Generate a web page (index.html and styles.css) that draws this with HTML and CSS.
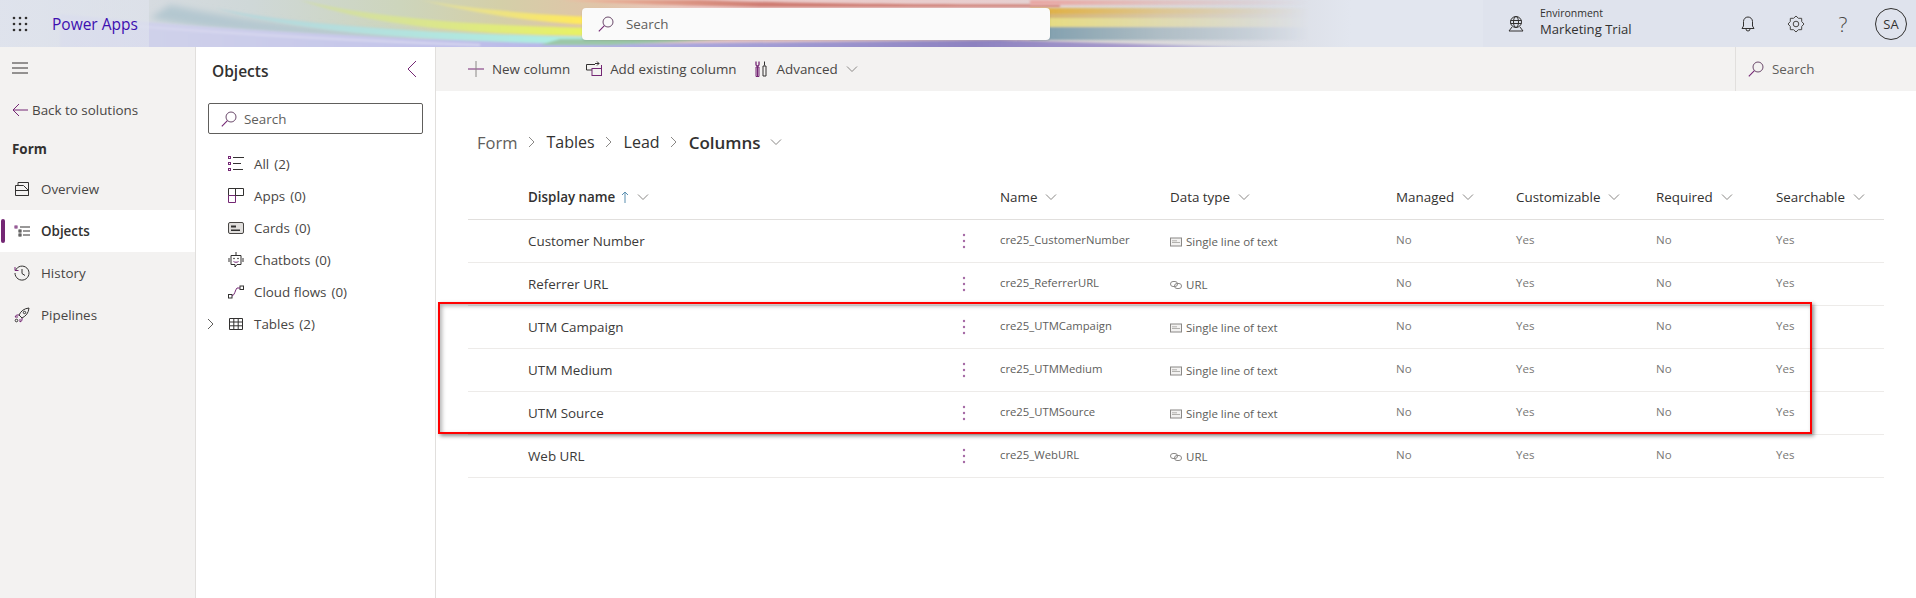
FILE: index.html
```html
<!DOCTYPE html>
<html lang="en">
<head>
<meta charset="utf-8">
<title>Power Apps</title>
<link rel="stylesheet" href="styles.css">
</head>
<body>
<svg class="sprite" width="0" height="0" aria-hidden="true">
  <symbol id="search" viewBox="0 0 16 16"><circle cx="10" cy="6" r="5" fill="none" stroke="#6b4a6b"/><path d="M6.400 9.600 .8 15.300" fill="none" stroke="#742774" stroke-width="1.100"/></symbol>
  <symbol id="chev" viewBox="0 0 12 8"><path d="M1 1.500 6 6.500 11 1.500" fill="none" stroke="#8a8886"/></symbol>
  <symbol id="dots" viewBox="0 0 4 16"><circle cx="2" cy="2" r="1.200"/><circle cx="2" cy="8" r="1.200"/><circle cx="2" cy="14" r="1.200"/></symbol>
  <symbol id="abc" viewBox="0 0 12 10"><rect x=".5" y="1" width="11" height="8" fill="#f3f2f1" stroke="#8a8886"/><path d="M2 5.500h8M2 3.800h5" stroke="#a19f9d" stroke-width=".8"/></symbol>
  <symbol id="link" viewBox="0 0 12 10"><rect x=".5" y="1.500" width="7" height="5" rx="2.500" fill="none" stroke="#8a8886"/><rect x="4.500" y="3.500" width="7" height="5" rx="2.500" fill="none" stroke="#8a8886"/></symbol>
</svg>

<header class="topbar">
  <svg class="rainbow" viewBox="0 0 1916 47" preserveAspectRatio="none" aria-hidden="true">
    <defs>
      <filter id="soft" filterUnits="userSpaceOnUse" x="0" y="-10" width="1916" height="67"><feGaussianBlur stdDeviation="1.1"/></filter>
      <filter id="wide" filterUnits="userSpaceOnUse" x="0" y="-10" width="1916" height="67"><feGaussianBlur stdDeviation="3.5"/></filter>
      <linearGradient id="base" x1="0" x2="1" y1="0" y2="0">
        <stop offset="0" stop-color="#dde1ea"/><stop offset=".078" stop-color="#d6dbe0"/><stop offset=".13" stop-color="#cfd8d8"/>
        <stop offset=".209" stop-color="#cdd5bc"/><stop offset=".261" stop-color="#d4cfa8"/><stop offset=".313" stop-color="#e0c4a8"/>
        <stop offset=".365" stop-color="#eccac8"/><stop offset=".522" stop-color="#e8cfd0"/><stop offset=".574" stop-color="#dcd8d6"/>
        <stop offset=".652" stop-color="#d8dbe2"/><stop offset=".705" stop-color="#e2e6ef"/><stop offset="1" stop-color="#e2e6ef"/>
      </linearGradient>
      <linearGradient id="lav" gradientUnits="userSpaceOnUse" x1="60" x2="1330" y1="0" y2="0">
        <stop offset="0" stop-color="#d3d5ea"/><stop offset=".25" stop-color="#c6c7ea"/><stop offset=".4" stop-color="#b6b6e8"/>
        <stop offset=".72" stop-color="#8d82c0"/><stop offset=".84" stop-color="#a89ccc"/><stop offset=".93" stop-color="#c6cadf"/><stop offset="1" stop-color="#dde1ea"/>
      </linearGradient>
      <linearGradient id="cyan" gradientUnits="userSpaceOnUse" x1="200" x2="560" y1="0" y2="0">
        <stop offset="0" stop-color="#b9d4da"/><stop offset="1" stop-color="#aeeee2"/>
      </linearGradient>
      <linearGradient id="lime" gradientUnits="userSpaceOnUse" x1="300" x2="582" y1="0" y2="0">
        <stop offset="0" stop-color="#cfdbb0"/><stop offset="1" stop-color="#e8f264"/>
      </linearGradient>
      <linearGradient id="yel" gradientUnits="userSpaceOnUse" x1="420" x2="582" y1="0" y2="0">
        <stop offset="0" stop-color="#dcdca8"/><stop offset="1" stop-color="#ffe95c"/>
      </linearGradient>
      <linearGradient id="sal" gradientUnits="userSpaceOnUse" x1="560" x2="760" y1="0" y2="0">
        <stop offset="0" stop-color="#f0bca0"/><stop offset="1" stop-color="#cf7d73"/>
      </linearGradient>
      <linearGradient id="fade" gradientUnits="userSpaceOnUse" x1="1040" x2="1310" y1="0" y2="0">
        <stop offset="0" stop-color="#fff"/><stop offset=".45" stop-color="#777"/><stop offset="1" stop-color="#000"/>
      </linearGradient>
      <mask id="fadeMask" maskUnits="userSpaceOnUse" x="0" y="0" width="1916" height="47"><rect width="1916" height="47" fill="url(#fade)"/></mask>
    </defs>
    <rect width="1916" height="47" fill="url(#base)"/>
    <path d="M170 5C230 18 300 28 420 34L400 40C300 36 200 30 150 18Z" fill="#b4c7d0" filter="url(#wide)"/>
    <g filter="url(#soft)">
      <path d="M60 14C220 30 400 40 600 44L1000 40 1340 50H60Z" fill="url(#lav)"/>
      <path d="M60 20C220 34 360 41 480 45" fill="none" stroke="#d8d8ef" stroke-width="2"/>
      <path d="M215 8C290 24 420 34 600 37V44C440 42 300 34 215 8Z" fill="url(#cyan)"/>
      <path d="M560 39H730L610 45H540Z" fill="#9cc8a8"/>
      <path d="M300 0C360 14 450 26 600 28V36C450 35 360 22 300 0Z" fill="url(#lime)"/>
      <path d="M420 0C470 8 530 15 600 17V25C530 23 470 12 420 0Z" fill="url(#yel)"/>
      <path d="M560 0C620 4 700 6 760 7H1060V4.500C950 5 800 4 700 0Z" fill="url(#sal)"/>
    </g>
    <g mask="url(#fadeMask)" filter="url(#soft)">
      <rect x="1030" y="0" width="290" height="5" fill="#e8a8a4"/>
      <rect x="1030" y="8" width="290" height="6" fill="#dfb043"/>
      <rect x="1030" y="14" width="290" height="4" fill="#d4b470"/>
      <rect x="1030" y="18" width="290" height="9" fill="#e6dc80"/>
      <rect x="1030" y="27" width="290" height="13" fill="#7f9fae"/>
    </g>
  </svg>
  <div class="brand">
    <svg class="waffle" viewBox="0 0 16 16" aria-hidden="true"><g fill="#323130"><circle cx="2" cy="2" r="1.300"/><circle cx="8" cy="2" r="1.300"/><circle cx="14" cy="2" r="1.300"/><circle cx="2" cy="8" r="1.300"/><circle cx="8" cy="8" r="1.300"/><circle cx="14" cy="8" r="1.300"/><circle cx="2" cy="14" r="1.300"/><circle cx="8" cy="14" r="1.300"/><circle cx="14" cy="14" r="1.300"/></g></svg>
    <span class="brand-name">Power Apps</span>
  </div>
  <div class="top-search">
    <svg class="ico16"><use href="#search"/></svg>
    <span>Search</span>
  </div>
  <div class="top-right">
    <svg class="env-icon" viewBox="0 0 18 18" aria-hidden="true"><g fill="none" stroke="#323130"><circle cx="9" cy="7" r="5.500"/><ellipse cx="9" cy="7" rx="2.500" ry="5.500"/><path d="M3.500 5.500h11M3.500 8.500h11M5 12 2 16h14l-3-4"/></g></svg>
    <div class="env-text">
      <span class="env-label">Environment</span>
      <span class="env-name">Marketing Trial</span>
    </div>
    <svg class="bell" viewBox="0 0 14 16" aria-hidden="true"><path d="M1 12.500h12l-1.500-2.500V5.500a4.500 4.500 0 0 0-9 0V10ZM5 13a2 2 0 0 0 4 0" fill="none" stroke="#323130"/></svg>
    <svg class="gear" viewBox="0 0 18 18" aria-hidden="true"><g fill="none" stroke="#484644" stroke-linejoin="round"><circle cx="9" cy="9" r="2.800"/><path d="M17 9 14.730 11.370 14.660 14.660 11.370 14.730 9 17 6.630 14.730 3.340 14.660 3.270 11.370 1 9 3.270 6.630 3.340 3.340 6.630 3.270 9 1 11.370 3.270 14.660 3.340 14.730 6.630Z"/></g></svg>
    <span class="help">?</span>
    <span class="avatar">SA</span>
  </div>
</header>

<div class="workspace">
  <nav class="sidenav">
    <div class="nav-row">
      <svg class="hamburger" viewBox="0 0 16 12" aria-hidden="true"><path d="M0 1h16M0 6h16M0 11h16" stroke="#323130"/></svg>
    </div>
    <div class="nav-row back">
      <svg class="back-arrow" viewBox="0 0 16 14" aria-hidden="true"><path d="M7 1 1 7l6 6M1 7h15" fill="none" stroke="#742774"/></svg>
      <span>Back to solutions</span>
    </div>
    <div class="nav-heading">Form</div>
    <div class="nav-row item">
      <svg class="nav-ico" viewBox="0 0 16 16" aria-hidden="true"><path d="M1.500 14.500V4.500h8l5 5v5ZM4 4.500V1.500h10.500v13M1.500 9.500h13" fill="none" stroke="#323130"/></svg>
      <span>Overview</span>
    </div>
    <div class="nav-row item active">
      <svg class="nav-ico" viewBox="0 0 16 16" aria-hidden="true"><g fill="none" stroke="#323130"><rect x="1" y="3" width="2" height="2" stroke="#742774"/><rect x="5" y="7" width="2" height="2"/><rect x="5" y="11" width="2" height="2"/><path d="M6 4h10M9 8h7M9 12h7"/></g></svg>
      <span>Objects</span>
    </div>
    <div class="nav-row item">
      <svg class="nav-ico" viewBox="0 0 16 16" aria-hidden="true"><g fill="none" stroke="#323130"><path d="M1.500 5.500A7 7 0 1 1 1 8"/><path d="M1 2v3.500h3.500" stroke="#742774"/><path d="M8 4v4.500l3 2"/></g></svg>
      <span>History</span>
    </div>
    <div class="nav-row item">
      <svg class="nav-ico" viewBox="0 0 16 16" aria-hidden="true"><g fill="none" stroke="#323130"><path d="M5 8C7 4 10 1.500 15 1c-.5 5-3 8-7 10Z"/><circle cx="10.500" cy="5.500" r="1.200"/><path d="M5 8H2.500L1 10h3M8 11v2.500L6 15v-3" stroke="#742774"/><circle cx="2.500" cy="13.500" r="1.300"/></g></svg>
      <span>Pipelines</span>
    </div>
  </nav>

  <aside class="objects">
    <div class="objects-head">
      <span class="objects-title">Objects</span>
      <svg class="collapse" viewBox="0 0 10 18" aria-hidden="true"><path d="M9 1 1 9l8 8" fill="none" stroke="#742774"/></svg>
    </div>
    <div class="objects-search">
      <svg class="ico16"><use href="#search"/></svg>
      <span>Search</span>
    </div>
    <ul class="tree">
      <li class="tree-row">
        <svg class="tree-ico" viewBox="0 0 16 16" aria-hidden="true"><g fill="none" stroke="#742774"><rect x=".5" y=".5" width="2" height="2"/><rect x=".5" y="6.500" width="2" height="2"/><rect x=".5" y="12.500" width="2" height="2"/></g><path d="M5 1.500h11M5 7.500h8M5 13.500h10" stroke="#323130" fill="none"/></svg>
        <span>All</span><span class="count">(2)</span>
      </li>
      <li class="tree-row">
        <svg class="tree-ico" viewBox="0 0 16 16" aria-hidden="true"><path d="M.5 7.500h7v7h-7ZM7.500 7.500h7" fill="none" stroke="#742774"/><path d="M.5 7.500v-7h15v7h-8M7.500.5v7" fill="none" stroke="#323130"/></svg>
        <span>Apps</span><span class="count">(0)</span>
      </li>
      <li class="tree-row">
        <svg class="tree-ico" viewBox="0 0 16 16" aria-hidden="true"><rect x=".5" y="2.500" width="15" height="11" rx="1.500" fill="#e1dfdd" stroke="#484644"/><path d="M3 5.500h5v2H3ZM3 9.500h9v1.500H3Z" fill="#323130"/></svg>
        <span>Cards</span><span class="count">(0)</span>
      </li>
      <li class="tree-row">
        <svg class="tree-ico" viewBox="0 0 16 16" aria-hidden="true"><g fill="none" stroke="#323130"><path d="M8 0v3M1 6v4M15 6v4"/><path d="M3 3.500h10v9H9l-2 2.500v-2.500H3Z"/><path d="M5.500 9.500c1.500 1 3.500 1 5 0" stroke="#742774"/></g><circle cx="6" cy="6.500" r=".8" fill="#323130"/><circle cx="10" cy="6.500" r=".8" fill="#323130"/></svg>
        <span>Chatbots</span><span class="count">(0)</span>
      </li>
      <li class="tree-row">
        <svg class="tree-ico" viewBox="0 0 16 16" aria-hidden="true"><g fill="none" stroke="#323130"><rect x=".5" y="10.500" width="3.500" height="3.500"/><rect x="12" y="2" width="3.500" height="3.500"/><path d="M4 12c3-1 3-6 5-8h3" stroke="#742774"/></g></svg>
        <span>Cloud flows</span><span class="count">(0)</span>
      </li>
      <li class="tree-row expandable">
        <svg class="tree-chev" viewBox="0 0 8 12" aria-hidden="true"><path d="M1 1l5 5-5 5" fill="none" stroke="#605e5c"/></svg>
        <svg class="tree-ico" viewBox="0 0 16 16" aria-hidden="true"><path d="M1.500 2.500h13v11h-13ZM1.500 6h13M1.500 9.800h13M5.800 2.500v11M10.200 2.500v11" fill="none" stroke="#323130"/></svg>
        <span>Tables</span><span class="count">(2)</span>
      </li>
    </ul>
  </aside>

  <main class="content">
    <div class="cmdbar">
      <button class="cmd" type="button">
        <svg class="cmd-ico" viewBox="0 0 16 16" aria-hidden="true"><path d="M0 8h16" stroke="#742774"/><path d="M8 0v16" stroke="#8a8886"/></svg>
        <span>New column</span>
      </button>
      <button class="cmd" type="button">
        <svg class="cmd-ico" viewBox="0 0 16 16" aria-hidden="true"><g fill="none"><path d="M6 9H.5V3.500H9M11 .5l2 2-2 2" stroke="#323130"/><path d="M9 2.500h4" stroke="#323130"/><rect x="6" y="7.500" width="9.500" height="7" stroke="#742774"/><path d="M15.500 4v3" stroke="#742774"/></g></svg>
        <span>Add existing column</span>
      </button>
      <button class="cmd" type="button">
        <svg class="cmd-ico" viewBox="0 0 16 16" aria-hidden="true"><g fill="none"><path d="M3 .5v3a1.500 1.500 0 0 0 3 0v-3M4.500 5v10" stroke="#742774" stroke-width="1.300"/><path d="M10 5v10h3V5ZM11.500 .5v4" stroke="#323130"/><path d="M3 6h3v9.500H3Z" stroke="#742774"/></g></svg>
        <span>Advanced</span>
        <svg class="chev"><use href="#chev"/></svg>
      </button>
      <div class="cmd-search">
        <svg class="ico16"><use href="#search"/></svg>
        <span>Search</span>
      </div>
    </div>

    <div class="crumbs">
      <span class="crumb first">Form</span>
      <svg class="crumb-sep" viewBox="0 0 8 12" aria-hidden="true"><path d="M1 1l5 5-5 5" fill="none" stroke="#8a8886"/></svg>
      <span class="crumb">Tables</span>
      <svg class="crumb-sep" viewBox="0 0 8 12" aria-hidden="true"><path d="M1 1l5 5-5 5" fill="none" stroke="#8a8886"/></svg>
      <span class="crumb">Lead</span>
      <svg class="crumb-sep" viewBox="0 0 8 12" aria-hidden="true"><path d="M1 1l5 5-5 5" fill="none" stroke="#8a8886"/></svg>
      <span class="crumb current">Columns</span>
      <svg class="chev crumb-chev"><use href="#chev"/></svg>
    </div>

    <div class="grid">
      <div class="row head">
        <div class="th strong">Display name<svg class="sort" viewBox="0 0 8 12" aria-hidden="true"><path d="M4 12V1M1 4l3-3 3 3" fill="none" stroke="#5b8fb0"/></svg><svg class="chev"><use href="#chev"/></svg></div>
        <div></div>
        <div class="th">Name<svg class="chev"><use href="#chev"/></svg></div>
        <div class="th">Data type<svg class="chev"><use href="#chev"/></svg></div>
        <div class="th">Managed<svg class="chev"><use href="#chev"/></svg></div>
        <div class="th">Customizable<svg class="chev"><use href="#chev"/></svg></div>
        <div class="th">Required<svg class="chev"><use href="#chev"/></svg></div>
        <div class="th">Searchable<svg class="chev"><use href="#chev"/></svg></div>
      </div>

      <div class="row">
        <div class="display">Customer Number</div><svg class="dots"><use href="#dots"/></svg>
        <div class="cell">cre25_CustomerNumber</div>
        <div class="cell type"><svg class="type-ico"><use href="#abc"/></svg>Single line of text</div>
        <div class="cell flag">No</div><div class="cell flag">Yes</div><div class="cell flag">No</div><div class="cell flag">Yes</div>
      </div>
      <div class="row">
        <div class="display">Referrer URL</div><svg class="dots"><use href="#dots"/></svg>
        <div class="cell">cre25_ReferrerURL</div>
        <div class="cell type"><svg class="type-ico"><use href="#link"/></svg>URL</div>
        <div class="cell flag">No</div><div class="cell flag">Yes</div><div class="cell flag">No</div><div class="cell flag">Yes</div>
      </div>
      <div class="row">
        <div class="display">UTM Campaign</div><svg class="dots"><use href="#dots"/></svg>
        <div class="cell">cre25_UTMCampaign</div>
        <div class="cell type"><svg class="type-ico"><use href="#abc"/></svg>Single line of text</div>
        <div class="cell flag">No</div><div class="cell flag">Yes</div><div class="cell flag">No</div><div class="cell flag">Yes</div>
      </div>
      <div class="row">
        <div class="display">UTM Medium</div><svg class="dots"><use href="#dots"/></svg>
        <div class="cell">cre25_UTMMedium</div>
        <div class="cell type"><svg class="type-ico"><use href="#abc"/></svg>Single line of text</div>
        <div class="cell flag">No</div><div class="cell flag">Yes</div><div class="cell flag">No</div><div class="cell flag">Yes</div>
      </div>
      <div class="row">
        <div class="display">UTM Source</div><svg class="dots"><use href="#dots"/></svg>
        <div class="cell">cre25_UTMSource</div>
        <div class="cell type"><svg class="type-ico"><use href="#abc"/></svg>Single line of text</div>
        <div class="cell flag">No</div><div class="cell flag">Yes</div><div class="cell flag">No</div><div class="cell flag">Yes</div>
      </div>
      <div class="row">
        <div class="display">Web URL</div><svg class="dots"><use href="#dots"/></svg>
        <div class="cell">cre25_WebURL</div>
        <div class="cell type"><svg class="type-ico"><use href="#link"/></svg>URL</div>
        <div class="cell flag">No</div><div class="cell flag">Yes</div><div class="cell flag">No</div><div class="cell flag">Yes</div>
      </div>
    </div>

    <div class="callout" aria-hidden="true"></div>
  </main>
</div>
</body>
</html>
```

FILE: styles.css
```css
* { box-sizing: border-box; }
html, body { height: 100%; }
body {
  margin: 0;
  overflow: hidden;
  background: #fff;
  color: #323130;
  font-family: "Open Sans", "Liberation Sans", sans-serif;
  font-size: 13.4px;
}
.sprite { position: absolute; }
svg { display: block; flex: none; }
.ico16 { width: 16px; height: 16px; }

/* top bar */
.topbar {
  position: relative;
  display: flex;
  align-items: center;
  height: 47px;
  overflow: hidden;
}
.rainbow { position: absolute; inset: 0; width: 100%; height: 100%; }
.brand {
  position: relative;
  display: flex;
  align-items: center;
  width: 582px;
  height: 47px;
  padding-left: 12px;
  background: linear-gradient(90deg, rgba(224,228,238,.6) 0, rgba(224,228,238,.6) 149px, transparent 149px);
}
.waffle { width: 16px; height: 16px; }
.brand-name {
  margin-left: 24px;
  color: #3d0fb0;
  font-size: 15.500px;
  font-weight: 500;
}
.top-search {
  position: relative;
  display: flex;
  align-items: center;
  gap: 12px;
  width: 468px;
  height: 32px;
  padding-left: 16px;
  border-radius: 4px;
  background: #fafafa;
  color: #605e5c;
  box-shadow: 0 1px 2px rgba(0,0,0,.1);
}
.top-right {
  position: relative;
  display: flex;
  align-items: center;
  width: 433px;
  height: 47px;
  margin-left: 433px;
  background: #dfe3ed;
}
.env-icon { width: 18px; height: 18px; margin-left: 24px; }
.env-text {
  display: flex;
  flex-direction: column;
  width: 201px;
  margin-left: 15px;
  margin-bottom: 3px;
}
.env-label { font-size: 10.500px; line-height: 14px; }
.env-name { font-size: 13.100px; line-height: 19px; }
.bell { width: 14px; height: 16px; }
.gear { width: 18px; height: 18px; margin-left: 32px; }
.help {
  width: 47px;
  margin-left: 14.500px;
  color: #484644;
  font-size: 21px;
  font-weight: 300;
  text-align: center;
}
.avatar {
  display: flex;
  align-items: center;
  justify-content: center;
  width: 32px;
  height: 32px;
  margin-left: 8.500px;
  border: 1px solid #323130;
  border-radius: 50%;
  font-size: 13px;
}

/* shell */
.workspace { display: flex; height: 551px; }

/* left nav */
.sidenav {
  width: 196px;
  background: #f3f2f1;
  border-right: 1px solid #e1dfdd;
}
.nav-row { display: flex; align-items: center; height: 42px; padding-left: 12px; }
.hamburger { width: 16px; height: 12px; }
.back-arrow { width: 16px; height: 14px; }
.back { gap: 4px; color: #484644; }
.nav-heading { height: 37px; line-height: 36px; padding-left: 12px; font-weight: 700; }
.item { position: relative; padding-left: 14px; color: #484644; }
.nav-ico { width: 16px; height: 16px; margin-right: 11px; }
.active { background: #fff; font-weight: 600; color: #323130; }
.active::before {
  content: "";
  position: absolute;
  left: 1px;
  top: 9px;
  width: 4px;
  height: 24px;
  border-radius: 2px;
  background: #742774;
}

/* objects panel */
.objects {
  width: 240px;
  padding: 0 12px;
  background: #fff;
  border-right: 1px solid #e1dfdd;
}
.objects-head {
  display: flex;
  align-items: center;
  justify-content: space-between;
  height: 48px;
  padding: 0 6px 0 4px;
}
.objects-title { font-size: 15.500px; font-weight: 600; }
.collapse { width: 10px; height: 18px; margin-top: -4px; }
.objects-search {
  display: flex;
  align-items: center;
  gap: 7px;
  width: 215px;
  height: 31px;
  margin: 8px 0 14px;
  padding-left: 12px;
  border: 1px solid #605e5c;
  border-radius: 2px;
  color: #605e5c;
}
.tree { margin: 0; padding: 0; list-style: none; }
.tree-row {
  position: relative;
  display: flex;
  align-items: center;
  height: 32px;
  padding-left: 20px;
  color: #484644;
}
.tree-ico { width: 16px; height: 16px; margin-right: 10px; }
.tree-chev {
  position: absolute;
  left: -1px;
  top: 10px;
  width: 8px;
  height: 12px;
}
.count { margin-left: 5px; }

/* command bar */
.content { position: relative; flex: 1; min-width: 0; }
.cmdbar {
  display: flex;
  align-items: center;
  height: 44px;
  padding-left: 32px;
  background: #f3f2f1;
}
.cmd {
  display: flex;
  align-items: center;
  height: 44px;
  margin-right: 16px;
  padding: 0;
  border: 0;
  background: none;
  color: #484644;
  font: inherit;
}
.cmd-ico { width: 16px; height: 16px; margin-right: 8px; }
.chev { width: 12px; height: 8px; margin-left: 8px; }
.cmd-search {
  display: flex;
  align-items: center;
  gap: 8px;
  width: 181px;
  height: 44px;
  margin-left: auto;
  padding-left: 12px;
  border-left: 1px solid #e1dfdd;
  color: #605e5c;
}

/* breadcrumb */
.crumbs {
  display: flex;
  align-items: center;
  height: 32px;
  margin-top: 35px;
  padding-left: 41px;
}
.crumb { font-size: 16px; color: #323130; }
.crumb.first { color: #605e5c; font-size: 16.500px; }
.crumb.current { font-size: 17px; font-weight: 600; }
.crumb-sep { width: 8px; height: 12px; margin: 0 10.500px; }
.crumb-chev { margin-left: 9px; }

/* table */
.grid { margin: 17px 32px 0; }
.row {
  display: grid;
  grid-template-columns: 428px 44px 170px 226px 120px 140px 120px 108px;
  align-items: center;
  height: 43px;
  padding-left: 60px;
  border-bottom: 1px solid #edebe9;
}
.head { height: 45px; border-bottom-color: #e1dfdd; }
.th { display: flex; align-items: center; font-weight: 500; }
.th.strong { font-weight: 600; }
.sort { width: 8px; height: 12px; margin-left: 6px; }
.display { color: #3b3a39; }
.dots { width: 4px; height: 16px; margin-left: 6px; fill: #a56aa5; }
.cell { padding-bottom: 3px; color: #605e5c; font-size: 11.300px; }
.cell.flag { color: #797775; font-size: 11.500px; }
.type { display: flex; align-items: center; gap: 4px; padding: 1px 0 0; font-size: 11.500px; }
.type-ico { width: 12px; height: 10px; }

/* annotation drawn over the table */
.callout {
  position: absolute;
  left: 2px;
  top: 255px;
  width: 1374px;
  height: 132px;
  border: 2px solid #ff0000;
  box-shadow: 2px 2px 4px rgba(0,0,0,.45), inset 2px 2px 4px rgba(0,0,0,.3);
  pointer-events: none;
}
```
